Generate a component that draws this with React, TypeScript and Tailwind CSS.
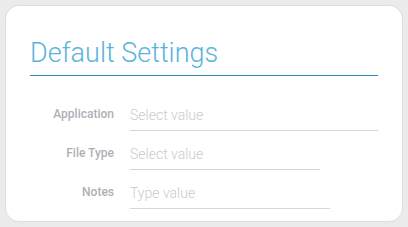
import React from 'react'

const fields = [
  { label: 'Application', placeholder: 'Select value', width: 'w-[248px]' },
  { label: 'File Type', placeholder: 'Select value', width: 'w-[190px]' },
  { label: 'Notes', placeholder: 'Type value', width: 'w-[200px]' },
]

export default function App() {
  return (
    <div className="w-[408px] h-[227px] bg-[#ebebeb] pt-[5px] pl-[5px] font-['Roboto',sans-serif]">
      <div className="w-[398px] h-[217px] bg-white rounded-[14px] border border-[#dedede] pl-[24px] pr-[24px] pt-[30px]">
        <div className="border-b border-[#2a8ab5] pb-[5px]">
          <h1 className="text-[27px] leading-[34px] font-light text-[#5cb3da]">Default Settings</h1>
        </div>
        <div className="mt-[27px] flex flex-col gap-[11px]">
          {fields.map((f) => (
            <div key={f.label} className="flex items-start">
              <div className="w-[85px] pr-[1px] text-right text-[12px] leading-[22px] font-medium text-[#aeb0b7]">
                {f.label}
              </div>
              <div className={`ml-[15px] ${f.width} border-b border-[#d6d6d6] h-[28px]`}>
                <span className="text-[14px] leading-[22px] font-light text-[#c8cacf]">{f.placeholder}</span>
              </div>
            </div>
          ))}
        </div>
      </div>
    </div>
  )
}
